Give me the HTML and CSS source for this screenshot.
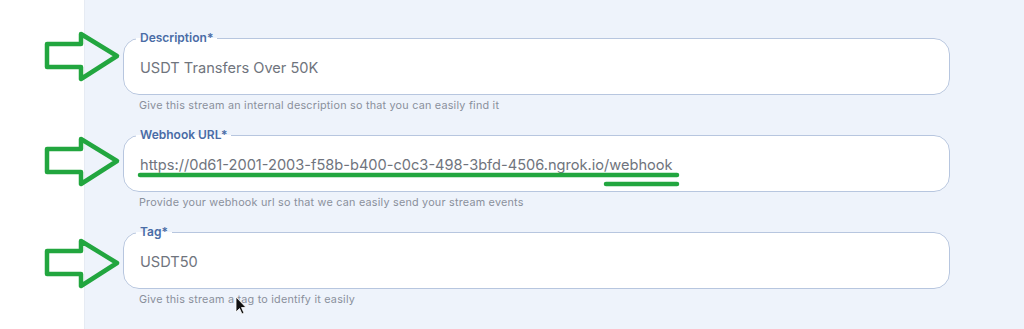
FILE: index.html
```html
<!DOCTYPE html>
<html>
  <head>
    <title>Stream Settings</title>
    <link rel="stylesheet" href="styles.css">
  </head>
  <body>
    <div class="page">
      <div class="gutter"></div>
      <div class="panel">
        <div class="group">
          <fieldset class="field">
            <legend>Description*</legend>
            <div class="value">USDT Transfers Over 50K</div>
          </fieldset>
          <p class="helper">Give this stream an internal description so that you can easily find it</p>
        </div>
        <div class="group">
          <fieldset class="field">
            <legend>Webhook URL*</legend>
            <div class="value">https://0d61-2001-2003-f58b-b400-c0c3-498-3bfd-4506.ngrok.io/webhook</div>
          </fieldset>
          <p class="helper">Provide your webhook url so that we can easily send your stream events</p>
        </div>
        <div class="group">
          <fieldset class="field">
            <legend>Tag*</legend>
            <div class="value">USDT50</div>
          </fieldset>
          <p class="helper">Give this stream a tag to identify it easily</p>
        </div>
      </div>

      <!-- hand drawn annotations on top of the screen -->
      <svg class="marks" width="1024" height="329" viewBox="0 0 1024 329">
        <g fill="none" stroke="#22a63f" stroke-width="4.5" stroke-linejoin="round">
          <polygon points="47,44 81,44 81,34 117,56 81,79 81,67 47,67" />
          <polygon points="47,149 81,149 81,139 117,161 81,184 81,172 47,172" />
          <polygon points="47,251 81,251 81,241 117,263 81,286 81,274 47,274" />
        </g>
        <g stroke="#22a63f" stroke-width="4.5" stroke-linecap="round">
          <line x1="140" y1="175" x2="677" y2="175" />
          <line x1="606" y1="184" x2="677" y2="184" />
        </g>
        <path class="cursor" d="M236 297 L236 312 L239.5 308.5 L242 314 L244 313 L241.5 307.5 L246 307.5 Z" fill="#111" stroke="#fff" stroke-width="0.8" />
      </svg>
    </div>
  </body>
</html>
```

FILE: styles.css
```css
body {
  margin: 0;
  font-family: Inter, 'Noto Sans', sans-serif;
}

.page {
  position: relative;
  display: flex;
  width: 1024px;
  height: 329px;
  overflow: hidden;
}

.gutter {
  width: 84px;
  background: #ffffff;
  border-right: 1px solid #e6ebf3;
}

.panel {
  flex: 1;
  background: #eef3fb;
  padding: 31px 0 0 38px;
}

.group {
  width: 827px;
  height: 97px;
}

.field {
  margin: 0;
  padding: 0 0 0 12px;
  border: 1.5px solid #b7c6df;
  border-radius: 16px;
  background: #ffffff;
  height: 64px;
  box-sizing: border-box;
}

.field legend {
  padding: 0 4px;
  font-size: 12px;
  line-height: 14px;
  font-weight: 600;
  color: #4a6ca6;
}

.value {
  padding: 14px 0 0 4px;
  font-size: 14.6px;
  line-height: 18px;
  color: #6f747d;
}

.helper {
  margin: 4px 0 0 16px;
  font-size: 10.8px;
  line-height: 13px;
  letter-spacing: 0.22px;
  color: #8a909b;
}

.marks {
  position: absolute;
  left: 0;
  top: 0;
  pointer-events: none;
}
```
